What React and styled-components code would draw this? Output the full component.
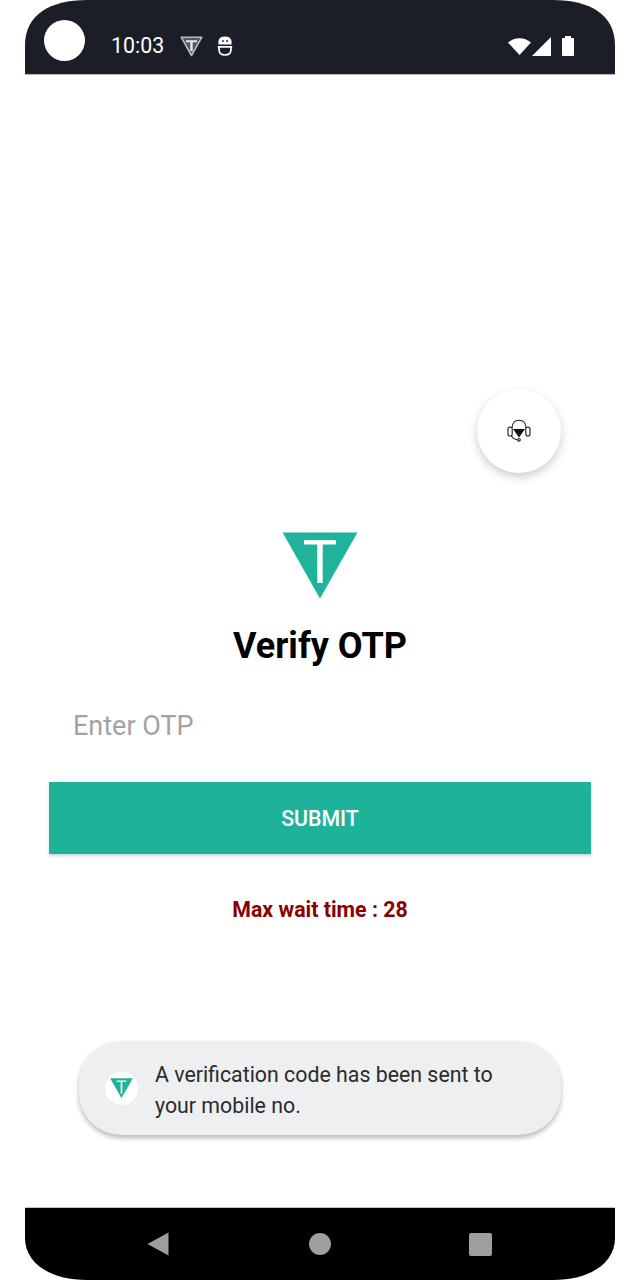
import React from 'react'
import styled, { createGlobalStyle } from 'styled-components'

const GlobalStyle = createGlobalStyle`
	html, body {
		margin: 0;
		padding: 0;
		background: #ffffff;
		font-family: Roboto, 'Liberation Sans', sans-serif;
	}
`

const TealTriangle = ({ size = 76 }) => (
	<svg width={size} height={size * 0.88} viewBox="0 0 76 67">
		<path d="M0.5 0.5H75.5L38 66.5Z" fill="#1fb39b" />
		<path d="M22 8H54V12.5H40.7V51H35.3V12.5H22Z" fill="#ffffff" />
	</svg>
)

const App = () => (
	<Phone>
		<GlobalStyle />
		<StatusBar>
			<StatusLeft>
				<Camera />
				<Clock>10:03</Clock>
				<NotifyIcon $gap={16}>
					<svg width="23" height="21" viewBox="0 0 23 21">
						<path d="M1.2 1.2H21.8L11.5 19.5Z" fill="#55575c" stroke="#b9babd" strokeWidth="1.6" strokeLinejoin="round" />
						<path d="M6 4.2H17V6.2H12.7V15H10.3V6.2H6Z" fill="#e8e8e8" />
					</svg>
				</NotifyIcon>
				<NotifyIcon $gap={14}>
					<svg width="16" height="20" viewBox="0 0 16 20" fill="none" stroke="#ffffff" strokeWidth="1.7">
						<path d="M2 8V5.5C2 3 4.5 1 8 1S14 3 14 5.5V8Z" fill="#ffffff" strokeWidth="1.2" />
						<path d="M5 5H6.8M9.2 5H11" stroke="#1b1e27" strokeWidth="1.5" />
						<path d="M0.8 10.8H15.2" />
						<path d="M2 11V13.5C2 17 4.5 19 8 19S14 17 14 13.5V11" />
					</svg>
				</NotifyIcon>
			</StatusLeft>
			<StatusRight>
				<svg width="23" height="17" viewBox="0 0 23 17">
					<path d="M0 4.5C6.5 -1.2 16.5 -1.2 23 4.5L11.5 17Z" fill="#ffffff" />
				</svg>
				<svg width="19" height="19" viewBox="0 0 19 19">
					<path d="M19 0V19H0Z" fill="#ffffff" />
				</svg>
				<Battery />
			</StatusRight>
		</StatusBar>

		<Content>
			<HelpButton>
				<svg width="24" height="24" viewBox="0 0 24 24" fill="none" stroke="#1a1a1a" strokeWidth="1.1">
					<path d="M5 9C5 4 8 1.2 12 1.2S19 4 19 9" />
					<rect x="1" y="8" width="4.2" height="9" rx="2.1" />
					<rect x="18.8" y="8" width="4.2" height="9" rx="2.1" />
					<path d="M6 10H18L12 18.5Z" fill="#111111" stroke="none" />
					<path d="M4.5 17C6 19.5 8.5 20.6 10.7 20.7" />
					<circle cx="12" cy="20.8" r="1.3" />
				</svg>
			</HelpButton>
			<Logo>
				<TealTriangle />
			</Logo>
			<Title>Verify OTP</Title>
			<OtpInput placeholder="Enter OTP" />
			<SubmitButton>SUBMIT</SubmitButton>
			<WaitText>Max wait time : 28</WaitText>
			<Toast>
				<ToastIcon>
					<TealTriangle size={23} />
				</ToastIcon>
				<ToastText>A verification code has been sent to your mobile no.</ToastText>
			</Toast>
		</Content>

		<NavBar>
			<BackIcon width="22" height="24" viewBox="0 0 22 24">
				<path d="M21.5 0.5V23.5L0.5 12Z" fill="#9e9e9e" />
			</BackIcon>
			<HomeDot />
			<RecentSquare />
		</NavBar>
	</Phone>
)

const Phone = styled.div`
	position: relative;
	display: flex;
	flex-direction: column;
	width: 590px;
	height: 1280px;
	margin: 0 25px;
	background: #ffffff;
`

const StatusBar = styled.div`
	display: flex;
	align-items: center;
	justify-content: space-between;
	flex: none;
	box-sizing: border-box;
	height: 75px;
	padding: 18px 41px 0 19px;
	background: #1b1e27;
	border-bottom: 1px solid #b4b5b8;
	clip-path: path('M0 75V45C0 15 25 0 62 0H528C565 0 590 15 590 45V75Z');
`

const StatusLeft = styled.div`
	display: flex;
	align-items: center;
`

const Camera = styled.div`
	width: 41px;
	height: 41px;
	margin: 0 26px 12px 0;
	border-radius: 50%;
	background: #ffffff;
`

const Clock = styled.span`
	color: #ffffff;
	font-size: 21.33px;
	line-height: 26px;
`

const NotifyIcon = styled.span`
	display: flex;
	margin-left: ${(props) => props.$gap}px;
`

const StatusRight = styled.div`
	display: flex;
	align-items: center;
	gap: 1px;
`

const Battery = styled.div`
	position: relative;
	width: 12px;
	height: 18px;
	margin: 2px 0 0 10px;
	background: #ffffff;
	border-radius: 1px;

	&::before {
		content: '';
		position: absolute;
		top: -2px;
		left: 3px;
		width: 6px;
		height: 2px;
		background: #ffffff;
	}
`

const Content = styled.div`
	position: relative;
	display: flex;
	flex: 1;
	flex-direction: column;
	align-items: center;
	box-sizing: border-box;
	padding: 457px 24px 0;
`

const HelpButton = styled.div`
	position: absolute;
	top: 314px;
	left: 452px;
	display: flex;
	align-items: center;
	justify-content: center;
	width: 84px;
	height: 84px;
	border-radius: 50%;
	background: #ffffff;
	box-shadow: 0 4px 10px rgba(0, 0, 0, 0.2);
`

const Logo = styled.div`
	display: flex;
	height: 67px;
`

const Title = styled.h1`
	margin: 26px 0 0;
	color: #000000;
	font-size: 36px;
	line-height: 42px;
	font-weight: 700;
`

const OtpInput = styled.input`
	align-self: stretch;
	box-sizing: border-box;
	height: 50px;
	margin-top: 34px;
	padding: 0 24px;
	border: 0;
	outline: 0;
	background: transparent;
	font-family: Roboto, sans-serif;
	font-size: 27px;

	&::placeholder {
		color: #a3a3a3;
		opacity: 1;
	}
`

const SubmitButton = styled.button`
	align-self: stretch;
	height: 72px;
	margin-top: 31px;
	border: 0;
	background: #1eb29b;
	color: #ffffff;
	font-family: Roboto, sans-serif;
	font-size: 21.33px;
	font-weight: 500;
	box-shadow: 0 2px 3px rgba(0, 0, 0, 0.18);
`

const WaitText = styled.div`
	margin-top: 43px;
	color: #8b0000;
	font-size: 21.33px;
	line-height: 26px;
	font-weight: 700;
`

const Toast = styled.div`
	position: absolute;
	top: 966px;
	left: 54px;
	display: flex;
	align-items: center;
	box-sizing: border-box;
	width: 482px;
	height: 94px;
	padding: 0 40px 0 26px;
	border-radius: 42px;
	background: #eeeff1;
	box-shadow: 0 3px 5px rgba(0, 0, 0, 0.28);
`

const ToastIcon = styled.div`
	display: flex;
	align-items: center;
	justify-content: center;
	flex: none;
	width: 33px;
	height: 33px;
	margin-right: 17px;
	border-radius: 50%;
	background: #ffffff;
`

const ToastText = styled.div`
	margin-top: 4px;
	color: #2b2b2b;
	font-size: 21.33px;
	line-height: 31px;
`

const NavBar = styled.div`
	display: flex;
	align-items: center;
	justify-content: space-between;
	flex: none;
	box-sizing: border-box;
	height: 73px;
	padding: 0 123px;
	background: #000000;
	border-top: 1px solid #c4c4c4;
	clip-path: path('M0 0H590V31C590 56 565 73 528 73H62C25 73 0 56 0 31Z');
`

const BackIcon = styled.svg`
	margin-left: -1px;
`

const HomeDot = styled.div`
	width: 22px;
	height: 22px;
	margin-left: 2px;
	border-radius: 50%;
	background: #9e9e9e;
`

const RecentSquare = styled.div`
	width: 23px;
	height: 23px;
	border-radius: 2px;
	background: #9e9e9e;
`

export default App
